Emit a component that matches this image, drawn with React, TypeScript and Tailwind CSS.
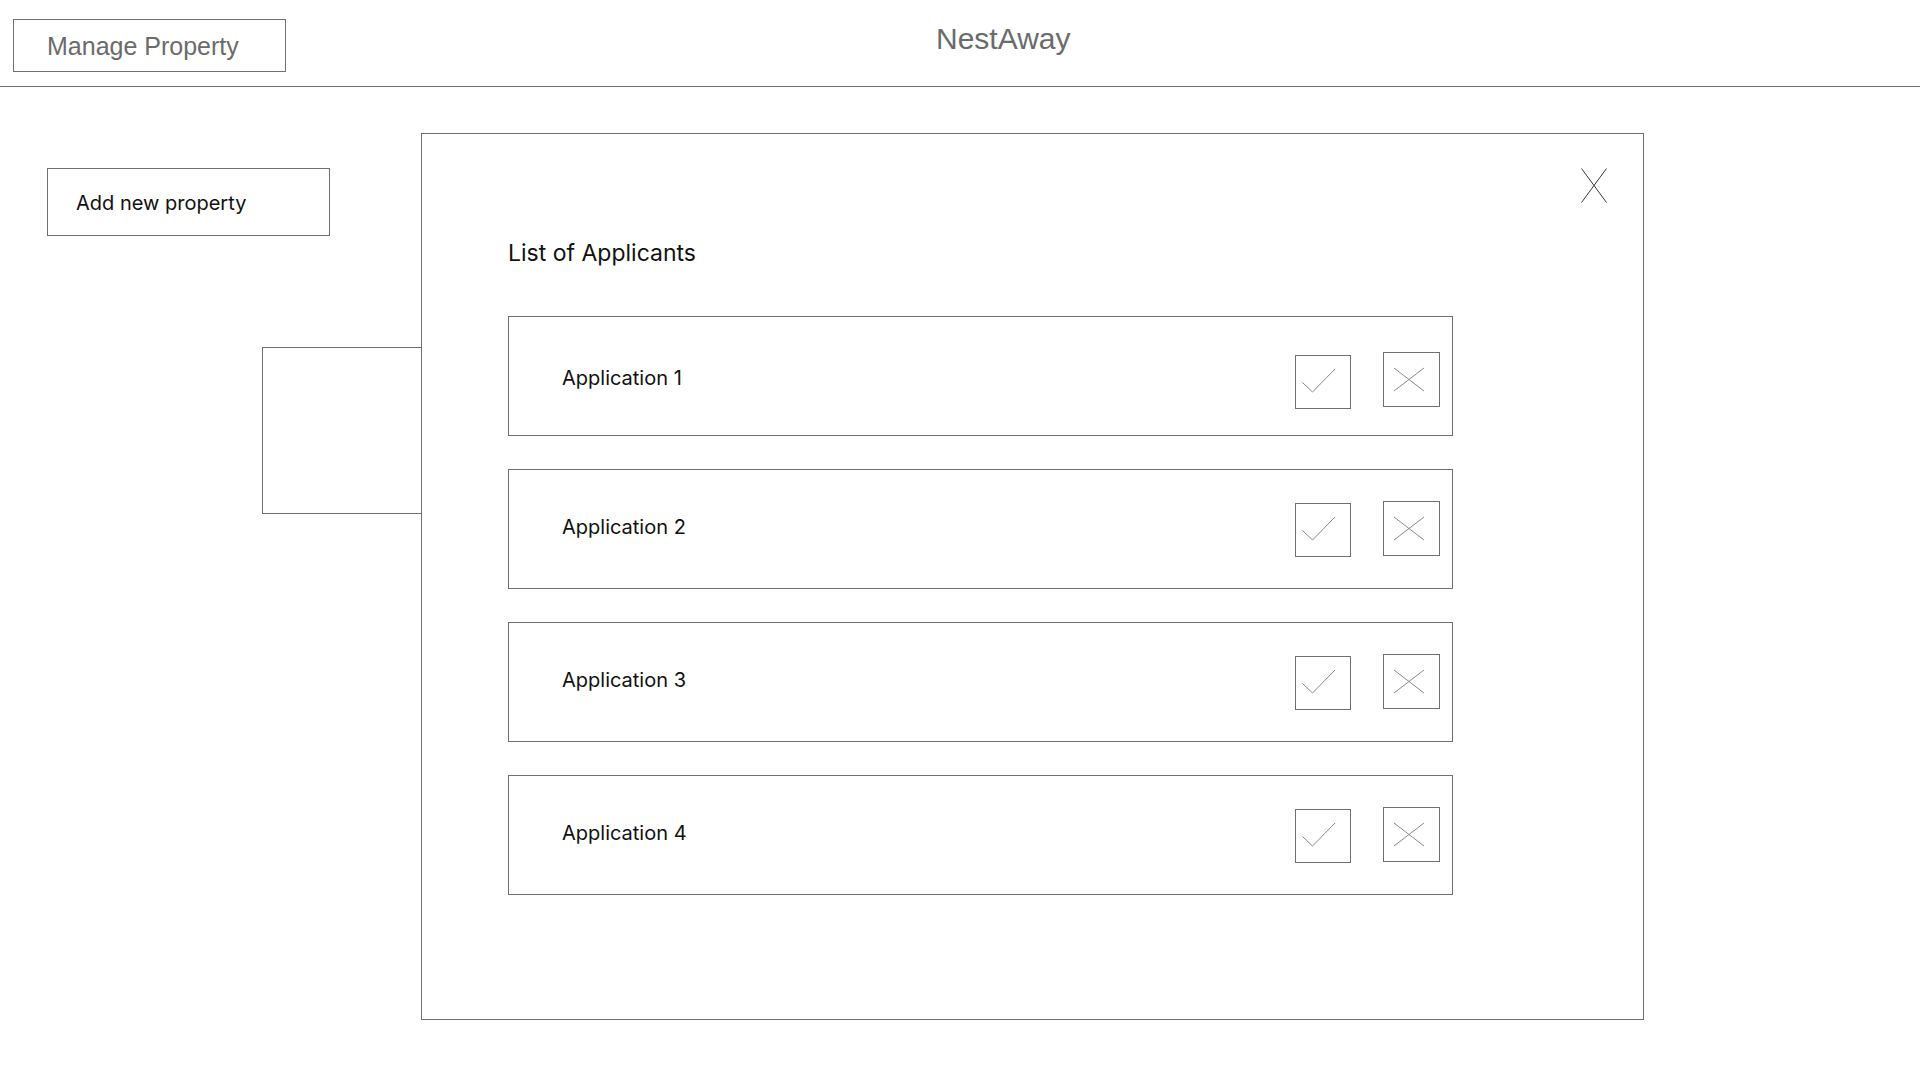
import React from "react";

const B = "border border-[#707070]";

function CheckBox() {
  return (
    <div className={`${B} w-[56px] h-[54px] mt-[2px] flex`}>
      <svg width="54" height="52" viewBox="0 0 54 52" fill="none">
        <polyline points="6.5,26.5 16.5,36 39,13" stroke="#8a8a8a" strokeWidth="1" />
      </svg>
    </div>
  );
}

function RejectBox() {
  return (
    <div className={`${B} w-[57px] h-[55px] mb-[2px] flex`}>
      <svg width="55" height="53" viewBox="0 0 55 53" fill="none">
        <line x1="10" y1="15" x2="40" y2="38" stroke="#8a8a8a" strokeWidth="1" />
        <line x1="40" y1="15" x2="10" y2="38" stroke="#8a8a8a" strokeWidth="1" />
      </svg>
    </div>
  );
}

function Row({ label, first }: { label: string; first?: boolean }) {
  return (
    <div
      className={`${B} w-[945px] h-[120px] flex items-center pl-[53px] pr-[12px] ${first ? "pt-[9px]" : ""}`}
    >
      <span className="mb-[5px] text-[20px] leading-none text-[#111] font-['Inter',sans-serif]">{label}</span>
      <div className="ml-auto flex items-center gap-[32px]">
        <CheckBox />
        <RejectBox />
      </div>
    </div>
  );
}

export default function App() {
  return (
    <div className="w-[1920px] h-[1080px] bg-white overflow-hidden">
      <header className="h-[87px] border-b border-[#707070] flex items-start">
        <div
          className={`${B} ml-[13px] mt-[19px] w-[273px] h-[53px] pl-[33px] pt-[14px] text-[25px] leading-none text-[#6b6b6b] font-['Liberation_Sans',Arial,sans-serif]`}
        >
          Manage Property
        </div>
        <span className="ml-[650px] mt-[24px] text-[30px] leading-none text-[#6b6b6b] font-['Liberation_Sans',Arial,sans-serif]">
          NestAway
        </span>
      </header>
      <main className="flex pt-[46px]">
        <div className="w-[421px] shrink-0 pt-[35px] flex flex-col items-start">
          <div
            className={`${B} ml-[47px] w-[283px] h-[68px] pl-[28px] flex items-center pt-[2px] text-[20px] leading-none text-[#111] font-['Inter',sans-serif]`}
          >
            Add new property
          </div>
          <div className={`${B} ml-[262px] mt-[111px] w-[160px] h-[167px] relative`} />
        </div>
        <div className={`${B} w-[1223px] h-[887px] shrink-0 flex flex-col`}>
          <div className="flex justify-end pt-[34px] pr-[36px]">
            <svg width="26" height="35" viewBox="0 0 26 35" fill="none">
              <line x1="0.5" y1="0.5" x2="25.5" y2="34.5" stroke="#3a3a3a" strokeWidth="1" />
              <line x1="25.5" y1="0.5" x2="0.5" y2="34.5" stroke="#3a3a3a" strokeWidth="1" />
            </svg>
          </div>
          <div className="pl-[86px]">
            <h2 className="mt-[39px] text-[23px] leading-none text-[#111] font-['Inter',sans-serif]">
              List of Applicants
            </h2>
            <div className="mt-[51px] flex flex-col gap-[33px]">
              <Row label="Application 1" first />
              <Row label="Application 2" />
              <Row label="Application 3" />
              <Row label="Application 4" />
            </div>
          </div>
        </div>
      </main>
    </div>
  );
}
